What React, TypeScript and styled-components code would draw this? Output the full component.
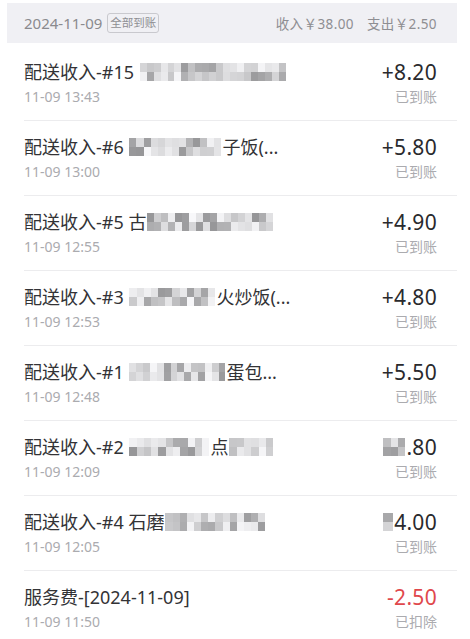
import React from "react";
import styled, { createGlobalStyle } from "styled-components";

const GlobalStyle = createGlobalStyle`
  html, body { margin: 0; padding: 0; background: #ffffff; }
  body {
    font-family: "Noto Sans", "Noto Sans CJK SC", sans-serif;
    -webkit-font-smoothing: antialiased;
  }
`;

const Page = styled.div`
  width: 470px;
  padding-top: 3px;
  box-sizing: border-box;
`;

const DayHeader = styled.div`
  margin: 0 13px 3px 7px;
  height: 40px;
  background: #f0f0f4;
  display: flex;
  align-items: center;
  justify-content: space-between;
  padding: 0 20px 0 17px;
`;

const DateGroup = styled.div`
  display: flex;
  align-items: center;
  gap: 5px;
`;

const DateText = styled.span`
  font-size: 15px;
  color: #8a8a8e;
`;

const Badge = styled.span`
  font-size: 11.5px;
  line-height: 18px;
  color: #8e8e92;
  border: 1px solid #c9c9ce;
  border-radius: 3px;
  padding: 0 2px;
`;

const Summary = styled.div`
  display: flex;
  gap: 13px;
  font-size: 13.5px;
  color: #8e8e92;
  letter-spacing: 0.4px;
`;

const List = styled.div`
  margin: 0 13px 0 24px;
`;

const Row = styled.div`
  display: flex;
  justify-content: space-between;
  align-items: flex-start;
  padding: 14px 20px 13px 0;
  border-bottom: 1px solid #ececee;
  &:last-child { border-bottom: none; }
`;

const Col = styled.div<{ $right?: boolean }>`
  display: flex;
  flex-direction: column;
  align-items: ${(p) => (p.$right ? "flex-end" : "flex-start")};
  gap: 3px;
`;

const Title = styled.div`
  font-size: 18px;
  line-height: 24px;
  color: #333336;
  white-space: nowrap;
  display: flex;
  align-items: center;
`;

const Time = styled.div`
  font-size: 14px;
  line-height: 20px;
  color: #ababaf;
`;

const Amount = styled.div<{ $neg?: boolean }>`
  font-size: 21px;
  line-height: 24px;
  color: ${(p) => (p.$neg ? "#e0484c" : "#2a2a2d")};
  display: flex;
  align-items: center;
  letter-spacing: 0.3px;
`;

const Status = styled.div`
  font-size: 14px;
  line-height: 20px;
  color: #ababaf;
`;

const MosaicGrid = styled.span<{ $cols: number }>`
  display: inline-grid;
  grid-template-columns: repeat(${(p) => p.$cols}, 1fr);
  grid-template-rows: repeat(2, 9px);
  margin: 0 1px;
`;

const Cell = styled.span<{ $shade: number }>`
  background: ${(p) => `rgb(${p.$shade}, ${p.$shade}, ${p.$shade + 2})`};
`;

function Mosaic({ width, seed }: { width: number; seed: number }) {
  const cols = Math.max(1, Math.round(width / 7));
  let s = seed * 9301 + 49297;
  const rnd = () => {
    s = (s * 9301 + 49297) % 233280;
    return s / 233280;
  };
  const cells: number[] = [];
  for (let i = 0; i < cols * 2; i++) {
    const r = rnd();
    const shade = r < 0.25 ? 150 + Math.round(rnd() * 30) : r < 0.6 ? 190 + Math.round(rnd() * 25) : 220 + Math.round(rnd() * 28);
    cells.push(shade);
  }
  return (
    <MosaicGrid $cols={cols} style={{ width }}>
      {cells.map((c, i) => (
        <Cell key={i} $shade={c} />
      ))}
    </MosaicGrid>
  );
}

type Part = string | { m: number };

type Item = {
  title: Part[];
  time: string;
  amount: Part[];
  status: string;
  neg?: boolean;
};

const items: Item[] = [
  { title: ["配送收入-#15 ", { m: 146 }], time: "11-09 13:43", amount: ["+8.20"], status: "已到账" },
  { title: ["配送收入-#6 ", { m: 92 }, "子饭(..."], time: "11-09 13:00", amount: ["+5.80"], status: "已到账" },
  { title: ["配送收入-#5 古", { m: 126 }], time: "11-09 12:55", amount: ["+4.90"], status: "已到账" },
  { title: ["配送收入-#3 ", { m: 86 }, "火炒饭(..."], time: "11-09 12:53", amount: ["+4.80"], status: "已到账" },
  { title: ["配送收入-#1 ", { m: 96 }, "蛋包..."], time: "11-09 12:48", amount: ["+5.50"], status: "已到账" },
  { title: ["配送收入-#2 ", { m: 80 }, "点", { m: 44 }], time: "11-09 12:09", amount: [{ m: 22 }, ".80"], status: "已到账" },
  { title: ["配送收入-#4 石磨", { m: 100 }], time: "11-09 12:05", amount: [{ m: 10 }, "4.00"], status: "已到账" },
  { title: ["服务费-[2024-11-09]"], time: "11-09 11:50", amount: ["-2.50"], status: "已扣除", neg: true },
];

function renderParts(parts: Part[], seed: number) {
  return parts.map((p, i) =>
    typeof p === "string" ? (
      <span key={i} style={{ whiteSpace: "pre" }}>{p}</span>
    ) : (
      <Mosaic key={i} width={p.m} seed={seed * 7 + i} />
    )
  );
}

export default function App() {
  return (
    <Page>
      <GlobalStyle />
      <DayHeader>
        <DateGroup>
          <DateText>2024-11-09</DateText>
          <Badge>全部到账</Badge>
        </DateGroup>
        <Summary>
          <span>收入￥38.00</span>
          <span>支出￥2.50</span>
        </Summary>
      </DayHeader>
      <List>
        {items.map((it, idx) => (
          <Row key={idx}>
            <Col>
              <Title>{renderParts(it.title, idx + 1)}</Title>
              <Time>{it.time}</Time>
            </Col>
            <Col $right>
              <Amount $neg={it.neg}>{renderParts(it.amount, idx + 31)}</Amount>
              <Status>{it.status}</Status>
            </Col>
          </Row>
        ))}
      </List>
    </Page>
  );
}
